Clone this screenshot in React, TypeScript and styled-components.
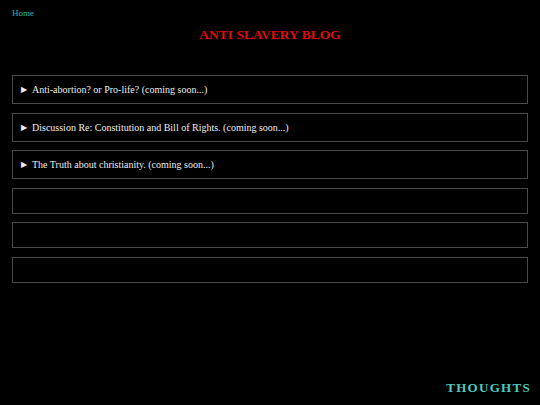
import React from "react";
import styled, { createGlobalStyle } from "styled-components";

const GlobalStyle = createGlobalStyle`
  html, body {
    margin: 0;
    padding: 0;
    background: #000;
  }
  body {
    font-family: "Liberation Serif", "Times New Roman", serif;
    color: #e6e6e6;
  }
`;

const Page = styled.div`
  height: 405px;
  display: flex;
  flex-direction: column;
  padding: 0 12px;
  box-sizing: border-box;
`;

const HomeLink = styled.a`
  display: block;
  margin-top: 8px;
  font-size: 9px;
  color: #22b5ad;
  text-decoration: none;
`;

const Title = styled.h1`
  margin: 9px 0 0;
  text-align: center;
  font-size: 13.5px;
  font-weight: bold;
  color: #e00c0c;
`;

const List = styled.div`
  margin-top: 32px;
  display: flex;
  flex-direction: column;
  gap: 8.6px;
`;

const Post = styled.details`
  border: 1px solid #4a4a4a;
  padding: 0 8px;
  height: 29px;
  box-sizing: border-box;
`;

const Summary = styled.summary`
  font-size: 10px;
  line-height: 27px;
  color: #ececec;
  cursor: pointer;
  list-style: none;
  display: flex;
  align-items: center;
  gap: 3px;

  &::-webkit-details-marker {
    display: none;
  }
  &::before {
    content: "▶";
    font-family: "DejaVu Sans", sans-serif;
    font-size: 8px;
    width: 8px;
  }
`;

const EmptyBox = styled.div`
  border: 1px solid #4a4a4a;
  height: 26px;
  box-sizing: border-box;
`;

const Footer = styled.div`
  margin-top: auto;
  margin-bottom: 9px;
  align-self: flex-end;
  margin-right: -3px;
  font-size: 13px;
  font-weight: bold;
  letter-spacing: 1.3px;
  color: #4fc9be;
`;

const posts = [
  "Anti-abortion? or Pro-life? (coming soon...)",
  "Discussion Re: Constitution and Bill of Rights. (coming soon...)",
  "The Truth about christianity. (coming soon...)",
];

export default function App() {
  return (
    <>
      <GlobalStyle />
      <Page>
        <HomeLink href="#">Home</HomeLink>
        <Title>ANTI SLAVERY BLOG</Title>
        <List>
          {posts.map((p) => (
            <Post key={p}>
              <Summary>{p}</Summary>
            </Post>
          ))}
          <EmptyBox />
          <EmptyBox />
          <EmptyBox />
        </List>
        <Footer>THOUGHTS</Footer>
      </Page>
    </>
  );
}
